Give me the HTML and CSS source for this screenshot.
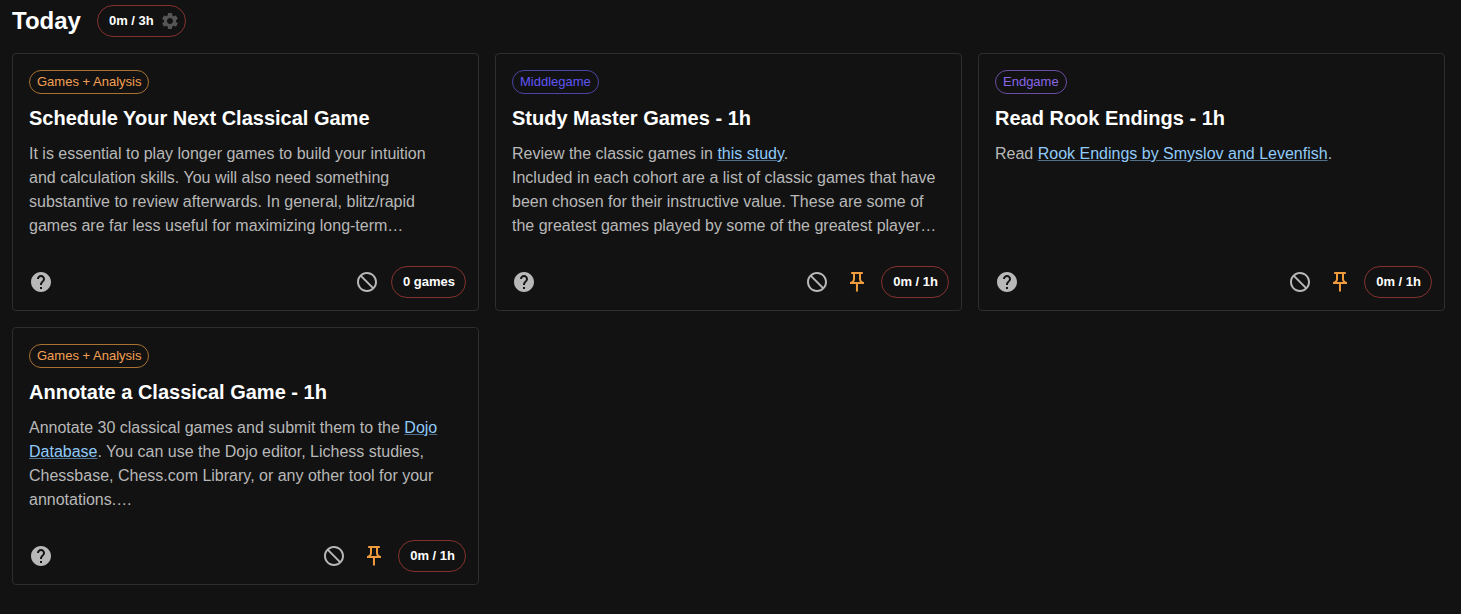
FILE: index.html
```html
<!DOCTYPE html>
<html lang="en">
<head>
<meta charset="utf-8">
<meta name="viewport" content="width=device-width, initial-scale=1">
<title>Today</title>
<link rel="stylesheet" href="styles.css">
</head>
<body>
<svg class="sprite" aria-hidden="true">
  <symbol id="settings" viewBox="0 0 24 24"><path d="M19.14 12.94c.04-.3.06-.61.06-.94 0-.32-.02-.64-.07-.94l2.03-1.58c.18-.14.23-.41.12-.61l-1.92-3.32c-.12-.22-.37-.29-.59-.22l-2.39.96c-.5-.38-1.03-.7-1.62-.94l-.36-2.54c-.04-.24-.24-.41-.48-.41h-3.84c-.24 0-.43.17-.47.41l-.36 2.54c-.59.24-1.13.57-1.62.94l-2.39-.96c-.22-.08-.47 0-.59.22L2.74 8.87c-.12.21-.08.47.12.61l2.03 1.58c-.05.3-.09.63-.09.94s.02.64.07.94l-2.03 1.58c-.18.14-.23.41-.12.61l1.92 3.32c.12.22.37.29.59.22l2.39-.96c.5.38 1.03.7 1.62.94l.36 2.54c.05.24.24.41.48.41h3.84c.24 0 .44-.17.47-.41l.36-2.54c.59-.24 1.13-.56 1.62-.94l2.39.96c.22.08.47 0 .59-.22l1.92-3.32c.12-.22.07-.47-.12-.61l-2.01-1.58zM12 15.6c-1.98 0-3.6-1.62-3.6-3.6s1.62-3.6 3.6-3.6 3.6 1.62 3.6 3.6-1.62 3.6-3.6 3.6z"/></symbol>
  <symbol id="help" viewBox="0 0 24 24"><path d="M12 2C6.48 2 2 6.48 2 12s4.48 10 10 10 10-4.48 10-10S17.52 2 12 2zm1 17h-2v-2h2v2zm2.07-7.75-.9.92C13.45 12.9 13 13.5 13 15h-2v-.5c0-1.1.45-2.1 1.17-2.83l1.24-1.26c.37-.36.59-.86.59-1.41 0-1.1-.9-2-2-2s-2 .9-2 2H8c0-2.21 1.79-4 4-4s4 1.79 4 4c0 .88-.36 1.68-.93 2.25z"/></symbol>
  <symbol id="skip" viewBox="0 0 24 24"><path d="M12 2C6.48 2 2 6.48 2 12s4.48 10 10 10 10-4.48 10-10S17.52 2 12 2zm0 18c-4.42 0-8-3.58-8-8 0-1.85.63-3.55 1.69-4.9L16.9 18.31C15.55 19.37 13.85 20 12 20zm6.31-3.1L7.1 5.69C8.45 4.63 10.15 4 12 4c4.42 0 8 3.58 8 8 0 1.85-.63 3.55-1.69 4.9z"/></symbol>
  <symbol id="pin" viewBox="0 0 24 24"><path d="M14 4v5c0 1.12.37 2.16 1 3H9c.65-.86 1-1.9 1-3V4h4m3-2H7c-.55 0-1 .45-1 1s.45 1 1 1h1v5c0 1.66-1.34 3-3 3v2h5.97v7l1 1 1-1v-7H19v-2c-1.66 0-3-1.34-3-3V4h1c.55 0 1-.45 1-1s-.45-1-1-1z"/></symbol>
</svg>
<main class="page">
  <header class="header">
    <h1 class="title">Today</h1>
    <button class="time" type="button">0m / 3h<svg class="gear" aria-hidden="true"><use href="#settings"/></svg></button>
  </header>
  <section class="cards">
    <article class="card">
      <div class="content">
        <span class="tag tag-games">Games + Analysis</span>
        <h2 class="name">Schedule Your Next Classical Game</h2>
        <p class="text">It is essential to play longer games to build your intuition<br>and calculation skills. You will also need something<br>substantive to review afterwards. In general, blitz/rapid<br>games are far less useful for maximizing long-term…</p>
      </div>
      <footer class="actions">
        <button class="icon help" type="button" aria-label="Help"><svg><use href="#help"/></svg></button>
        <button class="icon" type="button" aria-label="Skip"><svg><use href="#skip"/></svg></button>
        <button class="time" type="button">0 games</button>
      </footer>
    </article>
    <article class="card">
      <div class="content">
        <span class="tag tag-middle">Middlegame</span>
        <h2 class="name">Study Master Games - 1h</h2>
        <p class="text">Review the classic games in <a class="link" href="#">this study</a>.<br>Included in each cohort are a list of classic games that have been chosen for their instructive value. These are some of the greatest games played by some of the greatest player…</p>
      </div>
      <footer class="actions">
        <button class="icon help" type="button" aria-label="Help"><svg><use href="#help"/></svg></button>
        <button class="icon" type="button" aria-label="Skip"><svg><use href="#skip"/></svg></button>
        <button class="icon pin" type="button" aria-label="Unpin"><svg><use href="#pin"/></svg></button>
        <button class="time" type="button">0m / 1h</button>
      </footer>
    </article>
    <article class="card">
      <div class="content">
        <span class="tag tag-end">Endgame</span>
        <h2 class="name">Read Rook Endings - 1h</h2>
        <p class="text">Read <a class="link" href="#">Rook Endings by Smyslov and Levenfish</a>.</p>
      </div>
      <footer class="actions">
        <button class="icon help" type="button" aria-label="Help"><svg><use href="#help"/></svg></button>
        <button class="icon" type="button" aria-label="Skip"><svg><use href="#skip"/></svg></button>
        <button class="icon pin" type="button" aria-label="Unpin"><svg><use href="#pin"/></svg></button>
        <button class="time" type="button">0m / 1h</button>
      </footer>
    </article>
    <article class="card">
      <div class="content">
        <span class="tag tag-games">Games + Analysis</span>
        <h2 class="name">Annotate a Classical Game - 1h</h2>
        <p class="text">Annotate 30 classical games and submit them to the <a class="link" href="#">Dojo Database</a>. You can use the Dojo editor, Lichess studies, Chessbase, Chess.com Library, or any other tool for your annotations.…</p>
      </div>
      <footer class="actions">
        <button class="icon help" type="button" aria-label="Help"><svg><use href="#help"/></svg></button>
        <button class="icon" type="button" aria-label="Skip"><svg><use href="#skip"/></svg></button>
        <button class="icon pin" type="button" aria-label="Unpin"><svg><use href="#pin"/></svg></button>
        <button class="time" type="button">0m / 1h</button>
      </footer>
    </article>
  </section>
</main>
</body>
</html>
```
FILE: styles.css
```css
* { box-sizing: border-box; }
body {
  margin: 0;
  background: #121212;
  color: #fff;
  font-family: "Liberation Sans", Arial, sans-serif;
}
.sprite { display: none; }
.page { padding: 5px 16px 28px 12px; }
.header {
  display: flex;
  align-items: center;
  gap: 16px;
  margin-bottom: 16px;
}
.title {
  margin: 0;
  font-size: 24px;
  line-height: 32px;
  font-weight: 700;
}
.time {
  display: inline-flex;
  align-items: center;
  gap: 6px;
  height: 32px;
  padding: 0 10px 0 11px;
  border: 1px solid #83322d;
  border-radius: 16px;
  background: transparent;
  color: #fff;
  font: 700 13px/20px "Liberation Sans", Arial, sans-serif;
}
.gear {
  width: 20px;
  height: 20px;
  margin-right: -5px;
  fill: #555;
}
.cards {
  display: grid;
  grid-template-columns: repeat(auto-fill, minmax(400px, 1fr));
  gap: 16px;
}
.card {
  display: flex;
  flex-direction: column;
  border: 1px solid #2e2e2e;
  border-radius: 4px;
}
.content {
  flex: 1;
  display: flex;
  flex-direction: column;
  align-items: flex-start;
  padding: 16px 16px 24px;
}
.tag {
  height: 24px;
  padding: 0 7px;
  border: 1px solid;
  border-radius: 12px;
  font-size: 13px;
  line-height: 22px;
}
.tag-games { color: #f4a052; border-color: #a87232; }
.tag-middle { color: #5f55f5; border-color: #4c44a4; }
.tag-end { color: #8b66e6; border-color: #6a4ea4; }
.name {
  margin: 8px 0;
  font-size: 20px;
  line-height: 32px;
  font-weight: 700;
}
.text {
  margin: 0;
  color: #b8b8b8;
  font-size: 16px;
  line-height: 24px;
}
.link {
  color: #90caf9;
  text-decoration-color: #527089;
}
.actions {
  display: flex;
  align-items: center;
  padding: 0 12px 8px 8px;
}
.icon {
  width: 40px;
  height: 40px;
  padding: 8px;
  border: 0;
  background: transparent;
}
.icon svg {
  display: block;
  width: 24px;
  height: 24px;
  fill: #b8b8b8;
}
.help { margin-right: auto; }
.pin svg { fill: #f09b3c; }
.actions .time { margin-left: 4px; }
```
